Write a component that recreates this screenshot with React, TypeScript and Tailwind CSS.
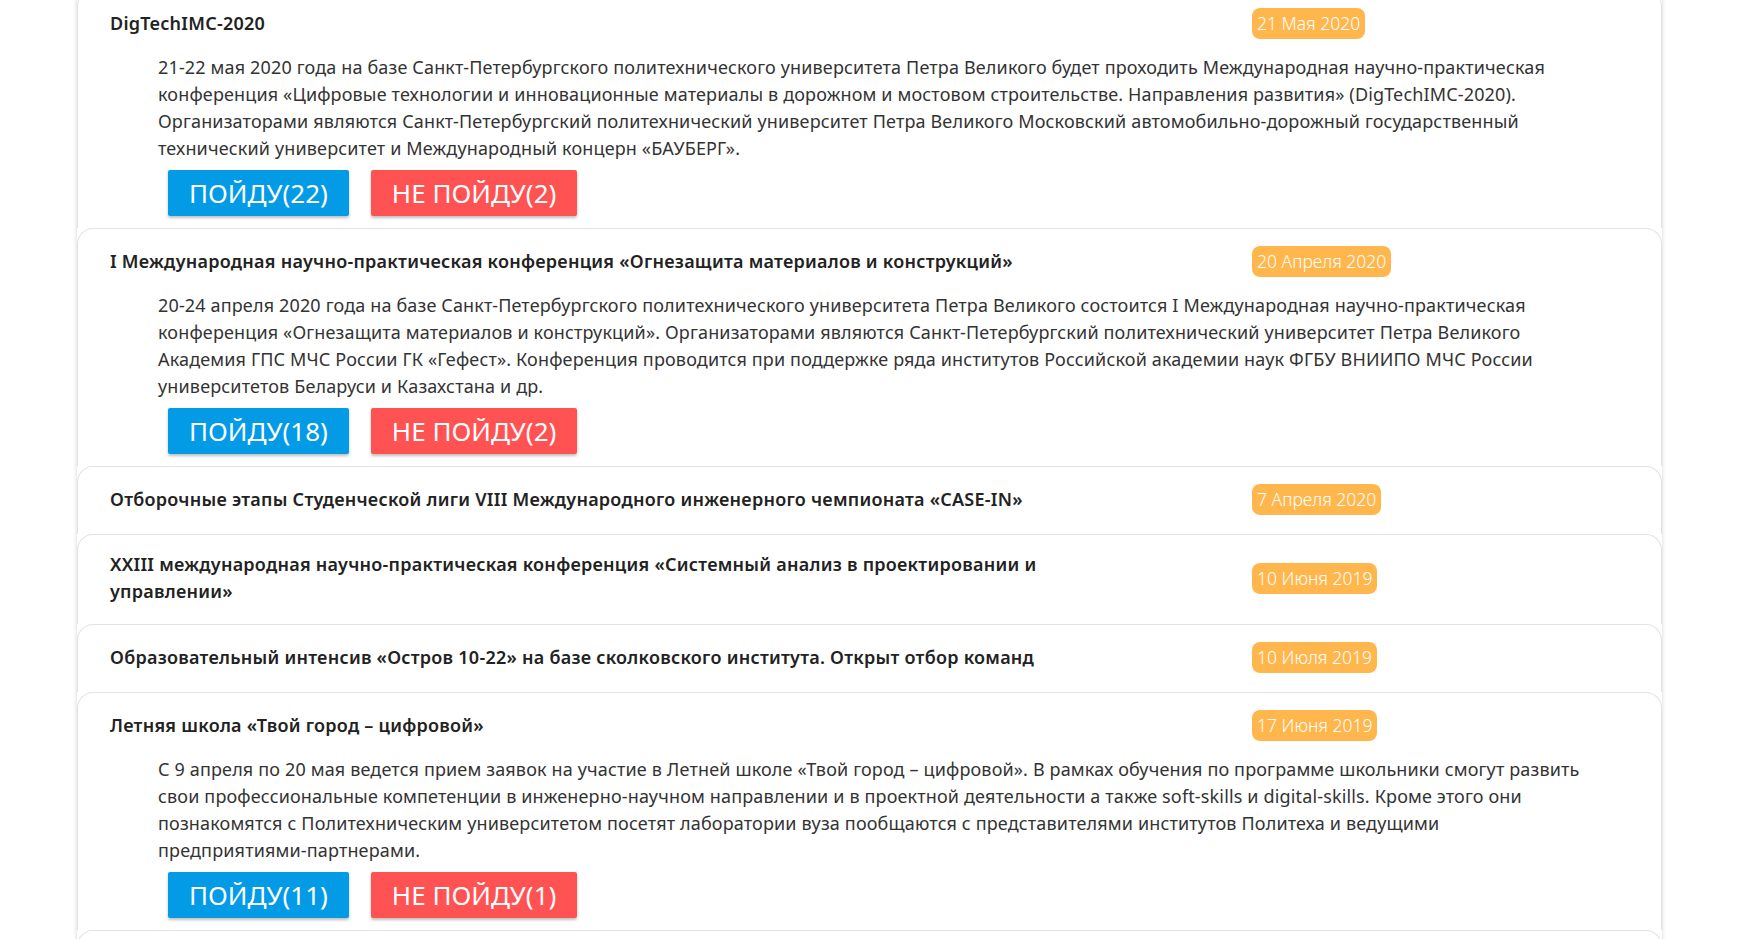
import React from 'react';

type EventItem = {
  title: string;
  date: string;
  lines?: string[];
  go?: number;
  no?: number;
};

const events: EventItem[] = [
  {
    title: 'DigTechIMC-2020',
    date: '21 Мая 2020',
    lines: [
      '21-22 мая 2020 года на базе Санкт-Петербургского политехнического университета Петра Великого будет проходить Международная научно-практическая',
      'конференция «Цифровые технологии и инновационные материалы в дорожном и мостовом строительстве. Направления развития» (DigTechIMC-2020).',
      'Организаторами являются Санкт-Петербургский политехнический университет Петра Великого Московский автомобильно-дорожный государственный',
      'технический университет и Международный концерн «БАУБЕРГ».',
    ],
    go: 22,
    no: 2,
  },
  {
    title: 'I Международная научно-практическая конференция «Огнезащита материалов и конструкций»',
    date: '20 Апреля 2020',
    lines: [
      '20-24 апреля 2020 года на базе Санкт-Петербургского политехнического университета Петра Великого состоится I Международная научно-практическая',
      'конференция «Огнезащита материалов и конструкций». Организаторами являются Санкт-Петербургский политехнический университет Петра Великого',
      'Академия ГПС МЧС России ГК «Гефест». Конференция проводится при поддержке ряда институтов Российской академии наук ФГБУ ВНИИПО МЧС России',
      'университетов Беларуси и Казахстана и др.',
    ],
    go: 18,
    no: 2,
  },
  {
    title: 'Отборочные этапы Студенческой лиги VIII Международного инженерного чемпионата «CASE-IN»',
    date: '7 Апреля 2020',
  },
  {
    title: 'XXIII международная научно-практическая конференция «Системный анализ в проектировании и управлении»',
    date: '10 Июня 2019',
  },
  {
    title: 'Образовательный интенсив «Остров 10-22» на базе сколковского института. Открыт отбор команд',
    date: '10 Июля 2019',
  },
  {
    title: 'Летняя школа «Твой город – цифровой»',
    date: '17 Июня 2019',
    lines: [
      'С 9 апреля по 20 мая ведется прием заявок на участие в Летней школе «Твой город – цифровой». В рамках обучения по программе школьники смогут развить',
      'свои профессиональные компетенции в инженерно-научном направлении и в проектной деятельности а также soft-skills и digital-skills. Кроме этого они',
      'познакомятся с Политехническим университетом посетят лаборатории вуза пообщаются с представителями институтов Политеха и ведущими',
      'предприятиями-партнерами.',
    ],
    go: 11,
    no: 1,
  },
  {
    title: 'Конкурс инновационных проектов молодых учёных',
    date: '1 Июня 2019',
  },
];

const EventCard: React.FC<{ item: EventItem }> = ({ item }) => {
  const open = !!item.lines;
  return (
    <div
      className={`border-t border-x border-[#e2e2e2] rounded-t-[16px] pt-4 pl-[32px] ${
        open ? 'pb-[12px]' : 'pb-[19px]'
      }`}
    >
      <div className="flex items-center min-h-[32px]">
        <div className="w-[1142px] shrink-0">
          <h3 className="max-w-[980px] text-[18px] tracking-[0.25px] leading-[27px] font-semibold text-[#222]">
            {item.title}
          </h3>
        </div>
        <span className="h-[31px] px-[5px] flex items-center rounded-[8px] bg-[#ffb74d] text-white text-[17.5px] font-light whitespace-nowrap">
          {item.date}
        </span>
      </div>

      {open && (
        <div>
          <p className="mt-[15px] ml-12 text-[18px] tracking-[0.15px] leading-[27px] text-[#333]">
            {item.lines!.map((l, i) => (
              <span key={i} className="block whitespace-nowrap">
                {l}
              </span>
            ))}
          </p>
          <div className="mt-2 ml-[58px] flex gap-[22px]">
            <button className="h-[46px] px-[21px] rounded-[2px] bg-[#039be5] text-white text-[26px] shadow-[0_2px_3px_rgba(0,0,0,0.25)]">
              ПОЙДУ({item.go})
            </button>
            <button className="h-[46px] px-[21px] rounded-[2px] bg-[#ff5252] text-white text-[26px] shadow-[0_2px_3px_rgba(0,0,0,0.25)]">
              НЕ ПОЙДУ({item.no})
            </button>
          </div>
        </div>
      )}
    </div>
  );
};

export default function App() {
  return (
    <div className="h-screen bg-white overflow-hidden font-['Noto_Sans','Liberation_Sans',sans-serif]">
      <div className="ml-[77px] w-[1585px] -mt-[10px] bg-white shadow-[0_0_4px_rgba(0,0,0,0.18)]">
        {events.map((e, i) => (
          <EventCard key={i} item={e} />
        ))}
      </div>
    </div>
  );
}
